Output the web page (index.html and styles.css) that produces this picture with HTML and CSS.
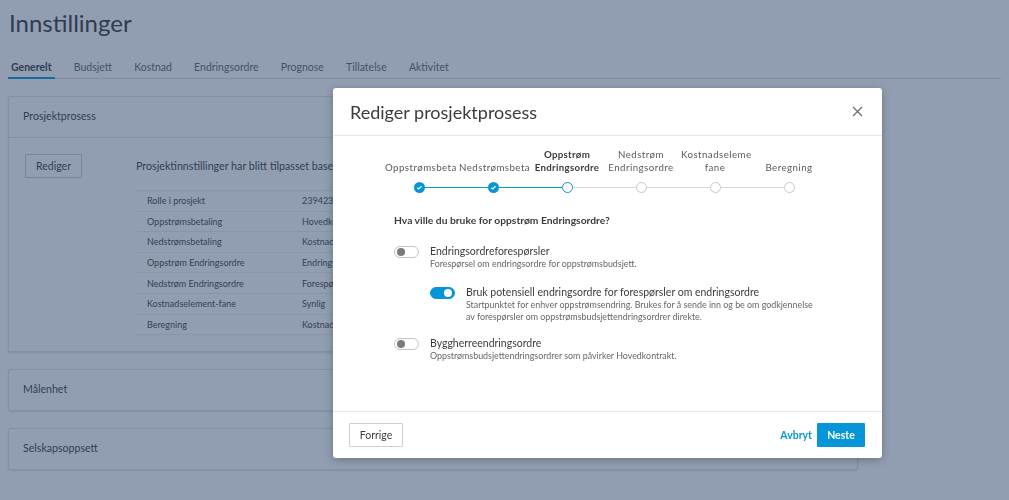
FILE: index.html
```html
<!DOCTYPE html>
<html lang="no">
<head>
<meta charset="utf-8">
<title>Innstillinger</title>
<link rel="stylesheet" href="styles.css">
</head>
<body>
<div class="page">
  <h1 class="title">Innstillinger</h1>
  <nav class="tabs">
    <a class="tab active">Generelt</a>
    <a class="tab">Budsjett</a>
    <a class="tab">Kostnad</a>
    <a class="tab">Endringsordre</a>
    <a class="tab">Prognose</a>
    <a class="tab">Tillatelse</a>
    <a class="tab">Aktivitet</a>
  </nav>
  <div class="cards">
    <section class="card">
      <div class="card-head">Prosjektprosess</div>
      <div class="card-body">
        <button class="btn">Rediger</button>
        <div class="info">
          <p class="info-text">Prosjektinnstillinger har blitt tilpasset basert på rollen din i prosjektet.</p>
          <table class="summary">
            <tr><td>Rolle i prosjekt</td><td>2394235 Hovedentreprenør</td></tr>
            <tr><td>Oppstrømsbetaling</td><td>Hovedkontrakt</td></tr>
            <tr><td>Nedstrømsbetaling</td><td>Kostnadselement</td></tr>
            <tr><td>Oppstrøm Endringsordre</td><td>Endringsordreforespørsler</td></tr>
            <tr><td>Nedstrøm Endringsordre</td><td>Forespørsler om endringsordre</td></tr>
            <tr><td>Kostnadselement-fane</td><td>Synlig</td></tr>
            <tr><td>Beregning</td><td>Kostnadselement</td></tr>
          </table>
        </div>
      </div>
    </section>
    <section class="card">
      <div class="card-head">Målenhet</div>
    </section>
    <section class="card">
      <div class="card-head">Selskapsoppsett</div>
    </section>
  </div>
</div>

<div class="overlay"></div>

<div class="modal">
  <header class="modal-head">
    <h2 class="modal-title">Rediger prosjektprosess</h2>
    <button class="close" aria-label="Lukk">
      <svg width="11" height="11" viewBox="0 0 11 11"><path d="M1 1 L10 10 M10 1 L1 10" stroke="#6a6a6a" stroke-width="1.2" fill="none"/></svg>
    </button>
  </header>
  <div class="modal-body">
    <ol class="stepper">
      <li class="step done">
        <span class="step-label">Oppstrømsbetaling</span>
        <span class="track"><i class="seg none"></i><b class="dot"><svg width="11" height="11" viewBox="0 0 11 11"><path d="M3.3 5.7 L4.8 7 L7.6 4.2" stroke="#fff" stroke-width="1.2" fill="none"/></svg></b><i class="seg blue"></i></span>
      </li>
      <li class="step done">
        <span class="step-label">Nedstrømsbetaling</span>
        <span class="track"><i class="seg blue"></i><b class="dot"><svg width="11" height="11" viewBox="0 0 11 11"><path d="M3.3 5.7 L4.8 7 L7.6 4.2" stroke="#fff" stroke-width="1.2" fill="none"/></svg></b><i class="seg blue"></i></span>
      </li>
      <li class="step current">
        <span class="step-label">Oppstrøm Endringsordre</span>
        <span class="track"><i class="seg blue"></i><b class="dot"></b><i class="seg"></i></span>
      </li>
      <li class="step">
        <span class="step-label">Nedstrøm Endringsordre</span>
        <span class="track"><i class="seg"></i><b class="dot"></b><i class="seg"></i></span>
      </li>
      <li class="step">
        <span class="step-label">Kostnadselement-fane</span>
        <span class="track"><i class="seg"></i><b class="dot"></b><i class="seg"></i></span>
      </li>
      <li class="step">
        <span class="step-label">Beregning</span>
        <span class="track"><i class="seg"></i><b class="dot"></b><i class="seg none"></i></span>
      </li>
    </ol>

    <div class="form">
      <p class="question">Hva ville du bruke for oppstrøm Endringsordre?</p>
      <div class="option first-option">
        <span class="toggle"></span>
        <div class="option-text">
          <div class="option-label">Endringsordreforespørsler</div>
          <div class="option-desc">Forespørsel om endringsordre for oppstrømsbudsjett.</div>
        </div>
      </div>
      <div class="option nested">
        <span class="toggle on"></span>
        <div class="option-text">
          <div class="option-label">Bruk potensiell endringsordre for forespørsler om endringsordre</div>
          <div class="option-desc">Startpunktet for enhver oppstrømsendring. Brukes for å sende inn og be om godkjennelse<br>av forespørsler om oppstrømsbudsjettendringsordrer direkte.</div>
        </div>
      </div>
      <div class="option last-option">
        <span class="toggle"></span>
        <div class="option-text">
          <div class="option-label">Byggherreendringsordre</div>
          <div class="option-desc">Oppstrømsbudsjettendringsordrer som påvirker Hovedkontrakt.</div>
        </div>
      </div>
    </div>
  </div>
  <footer class="modal-foot">
    <button class="btn btn-modal">Forrige</button>
    <div class="foot-right">
      <button class="link">Avbryt</button>
      <button class="btn-primary">Neste</button>
    </div>
  </footer>
</div>
</body>
</html>
```

FILE: styles.css
```css
* { box-sizing: border-box; }
html, body { margin: 0; padding: 0; }
body {
  font-family: Lato, "Liberation Sans", sans-serif;
  background: #ffffff;
  color: #3c3c3c;
  width: 1009px;
  height: 500px;
  overflow: hidden;
}
button { font-family: inherit; }

.page { padding: 8px 0 0 8px; }
.title {
  margin: 0;
  font-size: 24px;
  font-weight: 400;
  line-height: 30px;
  color: #3a3a3a;
  padding-left: 1px;
}

.tabs {
  display: flex;
  gap: 16.2px;
  margin-top: 18px;
  border-bottom: 1px solid #dcdcdc;
  margin-right: 8px;
  padding-left: 0;
}
.tab {
  font-size: 10.5px;
  line-height: 20px;
  padding: 1px 3px 0;
  border-bottom: 2px solid transparent;
  margin-bottom: -1px;
  color: #666;
}
.tab.active {
  font-weight: 700;
  color: #3c3c3c;
  border-bottom-color: #0696d7;
}

.cards {
  width: 850px;
  margin-top: 17px;
  display: flex;
  flex-direction: column;
  gap: 17px;
}
.card {
  border: 1px solid #e2e2e2;
  border-radius: 2px;
  background: #fff;
  box-shadow: 0 1px 2px rgba(0,0,0,0.12);
}
.card-head {
  font-size: 10.6px;
  line-height: 38px;
  padding: 0 14px 2px;
  color: #3c3c3c;
}
.card:first-child .card-head { border-bottom: 1px solid #e2e2e2; }

.card-body {
  display: grid;
  grid-template-columns: 111px 1fr;
  padding: 16px;
}
.btn {
  width: 57px;
  height: 24px;
  border: 1px solid #cfcfcf;
  background: #fff;
  color: #3c3c3c;
  font-size: 10.5px;
  border-radius: 1px;
  padding: 0;
}
.info-text {
  margin: 0;
  font-size: 10.7px;
  line-height: 24px;
  color: #3c3c3c;
  white-space: nowrap;
}
.summary {
  margin-top: 12px;
  width: 600px;
  border-collapse: collapse;
  border-top: 1px solid #ececec;
  font-size: 9px;
  color: #444;
}
.summary td {
  height: 20.6px;
  padding: 0 0 0 11px;
  border-bottom: 1px solid #ececec;
  white-space: nowrap;
}
.summary td:first-child { width: 155px; }

.overlay {
  position: fixed;
  inset: 0;
  background: rgba(35, 61, 101, 0.5);
}

.modal {
  position: fixed;
  left: 333px;
  top: 88px;
  width: 549px;
  height: 370px;
  background: #fff;
  border-radius: 3px;
  box-shadow: 0 2px 8px rgba(0,0,0,0.28);
  display: flex;
  flex-direction: column;
}
.modal-head {
  height: 48px;
  border-bottom: 1px solid #e6e6e6;
  display: flex;
  align-items: center;
  justify-content: space-between;
  padding: 0 19px 0 17px;
}
.modal-title {
  margin: 0;
  font-size: 18px;
  font-weight: 400;
  color: #3c3c3c;
}
.close {
  border: 0;
  background: none;
  padding: 0;
  width: 11px;
  height: 11px;
  display: flex;
}

.modal-body {
  flex: 1;
  padding-top: 12px;
}
.stepper {
  list-style: none;
  margin: 0 0 0 49px;
  padding: 0;
  display: flex;
}
.step {
  width: 74px;
  display: flex;
  flex-direction: column;
}
.step-label {
  height: 26px;
  padding: 0 3px;
  display: flex;
  flex-direction: column;
  justify-content: flex-end;
  text-align: center;
  overflow: hidden;
  font-size: 9.7px;
  letter-spacing: 0.45px;
  line-height: 13px;
  color: #5a5a5a;
}
.step.current .step-label {
  font-weight: 700;
  letter-spacing: 0.3px;
  color: #3c3c3c;
}
.track {
  margin-top: 8px;
  height: 11px;
  display: flex;
  align-items: center;
}
.seg {
  flex: 1;
  height: 1px;
  background: #d6d6d6;
}
.seg.blue { background: #0696d7; }
.seg.none { background: transparent; }
.dot {
  width: 11px;
  height: 11px;
  border-radius: 50%;
  border: 1px solid #c9c9c9;
  background: #fff;
  display: flex;
  flex: none;
}
.step.done .dot {
  background: #0696d7;
  border: 0;
}
.step.current .dot {
  border: 1.5px solid #0696d7;
}

.form { padding: 0 0 0 61px; }
.question {
  margin: 20px 0 0;
  font-size: 10.3px;
  font-weight: 700;
  line-height: 14px;
  color: #3c3c3c;
}
.option {
  display: flex;
  align-items: flex-start;
  gap: 11px;
}
.option.first-option { margin-top: 18px; }
.option.nested { margin-left: 36px; margin-top: 16px; }
.option.last-option { margin-top: 14px; }
.toggle {
  flex: none;
  width: 25px;
  height: 12px;
  margin-top: 0.5px;
  border: 1px solid #c4c4c4;
  border-radius: 6px;
  background: #fff;
  display: flex;
  align-items: center;
  padding: 0 2px;
}
.toggle::after {
  content: "";
  width: 8px;
  height: 8px;
  border-radius: 50%;
  background: #7a7a7a;
}
.toggle.on {
  background: #0696d7;
  border-color: #0696d7;
  justify-content: flex-end;
}
.toggle.on::after { background: #fff; }
.option-label {
  font-size: 10.5px;
  line-height: 13px;
  color: #3c3c3c;
}
.option-desc {
  font-size: 8.9px;
  line-height: 12px;
  color: #666;
}

.modal-foot {
  border-top: 1px solid #e6e6e6;
  padding: 11px 17px 11px 16px;
  display: flex;
  justify-content: space-between;
  align-items: center;
}
.btn-modal { width: 54px; }
.foot-right { display: flex; align-items: center; gap: 5px; }
.link {
  border: 0;
  background: none;
  padding: 0;
  color: #0696d7;
  font-weight: 700;
  font-size: 10.5px;
}
.btn-primary {
  width: 48px;
  height: 24px;
  border: 0;
  border-radius: 1px;
  background: #0696d7;
  color: #fff;
  font-weight: 700;
  font-size: 10.5px;
}
```
